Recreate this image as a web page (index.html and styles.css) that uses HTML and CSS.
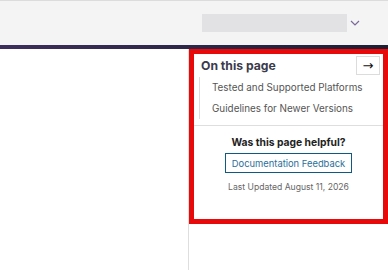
FILE: index.html
```html
<!DOCTYPE html>
<html>
<head>
    <title>On this page</title>
    <link rel="stylesheet" href="styles.css">
</head>
<body>
    <header class="topbar">
        <div class="search-box"></div>
        <svg class="chevron" width="10" height="6" viewBox="0 0 10 6">
            <path d="M1 1 L5 5 L9 1" fill="none" stroke="#7a6a9a" stroke-width="1.2"/>
        </svg>
    </header>
    <div class="nav-strip"></div>
    <div class="page">
        <main class="content"></main>
        <aside class="sidebar">
            <div class="toc-panel">
                <div class="toc-head">
                    <h2>On this page</h2>
                    <button class="arrow-btn">&#8594;</button>
                </div>
                <ul class="toc-list">
                    <li>Tested and Supported Platforms</li>
                    <li>Guidelines for Newer Versions</li>
                </ul>
                <div class="helpful">
                    <p class="question">Was this page helpful?</p>
                    <button class="feedback">Documentation Feedback</button>
                    <p class="updated">Last Updated August 11, 2026</p>
                </div>
            </div>
        </aside>
    </div>
</body>
</html>
```

FILE: styles.css
```css
/* Estilo general */
body {
    margin: 0;
    font-family: Inter, "Noto Sans", sans-serif;
    background-color: white;
}
.topbar {
    height: 44px;
    border-top: 1px solid #dcdcdc;
    background-color: #f4f4f4;
    display: flex;
    align-items: flex-start;
}
.search-box {
    width: 145px;
    height: 18px;
    margin: 13px 0 0 202px;
    background-color: #e2e2e5;
}
.chevron {
    margin: 19px 0 0 3px;
}
.nav-strip {
    height: 4px;
    background: linear-gradient(to right, #3d2f5c, #1e1e33);
}
.page {
    display: flex;
    height: 221px;
}
.content {
    width: 188px;
}
.sidebar {
    width: 199px;
    border-left: 1px solid #dedede;
}
.toc-panel {
    height: 165px;
    width: 189px;
    border: 5px solid #e8090b;
}
.toc-head {
    display: flex;
    align-items: center;
    justify-content: space-between;
    margin: 2px 3px 0 7px;
}
.toc-head h2 {
    margin: 0;
    font-size: 12.2px;
    font-weight: 700;
    color: #3b3b4b;
}
.arrow-btn {
    width: 24px;
    height: 19px;
    padding: 0;
    border: 1px solid #dcdcdc;
    background-color: white;
    font-size: 13px;
    line-height: 15px;
    color: #111;
    font-family: "DejaVu Sans", sans-serif;
}
.toc-list {
    list-style: none;
    margin: 2px 0 0 5px;
    padding: 0 0 0 12px;
    border-left: 1px solid #dcdcdc;
}
.toc-list li {
    font-size: 9.9px;
    color: #555;
    line-height: 21px;
}
.helpful {
    margin-top: 6px;
    border-top: 1px solid #dedede;
    text-align: center;
    padding-top: 10px;
}
.question {
    margin: 0;
    font-size: 10.3px;
    font-weight: 700;
    color: #222;
    line-height: 13px;
}
.feedback {
    margin-top: 4px;
    padding: 0 6px;
    height: 20px;
    border: 1px solid #0e5a85;
    background-color: white;
    font-family: Inter, "Noto Sans", sans-serif;
    font-size: 9.4px;
    color: #2a6f9a;
}
.updated {
    margin: 9px 0 0;
    font-size: 8.6px;
    color: #666;
}
```
